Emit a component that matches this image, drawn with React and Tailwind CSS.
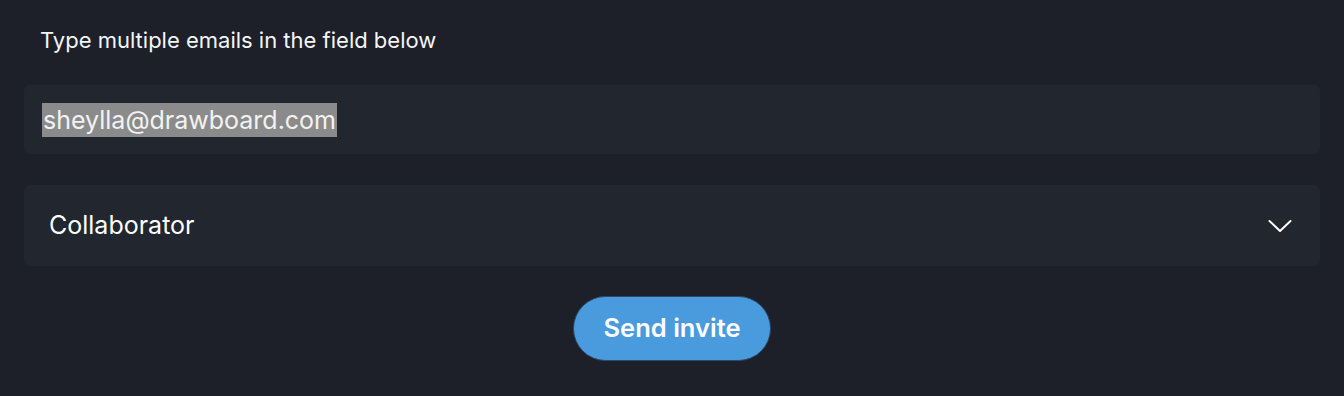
import React from "react";

const Chevron = () => (
  <svg width="24" height="14" viewBox="0 0 24 14" fill="none">
    <path
      d="M1.5 2 L12 12 L22.5 2"
      stroke="#ffffff"
      strokeWidth="2"
      strokeLinecap="round"
      strokeLinejoin="round"
    />
  </svg>
);

const App = () => {
  return (
    <div
      className="w-[1344px] h-[396px] bg-[#1d2029] text-white px-6 pt-[26px]"
      style={{ fontFamily: "Inter, 'Noto Sans', sans-serif" }}
    >
      {/* Label */}
      <p className="pl-4 text-[22px] leading-[28px] text-[#f4f5f7]">
        Type multiple emails in the field below
      </p>

      {/* Email field */}
      <div className="mt-[31px] h-[69px] rounded-md bg-[#22262f] flex items-center pl-[18px]">
        <span className="bg-[#8b8b8b] text-[#f2f2f2] text-[25px] leading-[34px] px-[1px]">
          sheylla@drawboard.com
        </span>
      </div>

      {/* Role select */}
      <div className="mt-[31px] h-[81px] rounded-md bg-[#22262f] flex items-center justify-between pl-[25px] pr-[28px]">
        <span className="text-[25px] text-white">Collaborator</span>
        <Chevron />
      </div>

      {/* Button */}
      <div className="flex justify-center mt-[30px]">
        <button className="w-[198px] h-[65px] rounded-full bg-[#4a9ade] border border-[#2a4a6a] text-white font-semibold text-[25.5px]">
          Send invite
        </button>
      </div>
    </div>
  );
};

export default App;
